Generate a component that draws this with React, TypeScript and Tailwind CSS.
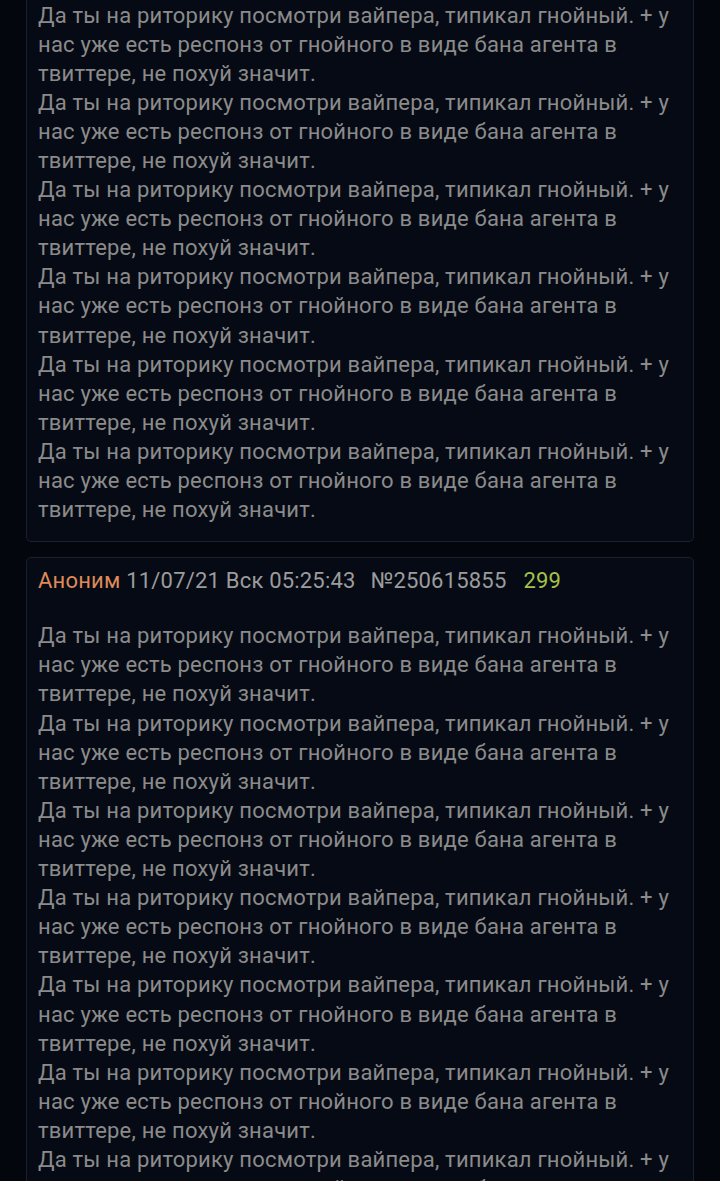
import React from "react";

const P = "Да ты на риторику посмотри вайпера, типикал гнойный. + у нас уже есть респонз от гнойного в виде бана агента в твиттере, не похуй значит.";

function Body({ n }: { n: number }) {
  return (
    <div className="text-[#8b8b8b] tracking-[0.2px]">
      {Array.from({ length: n }).map((_, i) => (
        <div key={i}>{P}</div>
      ))}
    </div>
  );
}

export default function App() {
  return (
    <div
      className="min-h-[1181px] h-[1181px] overflow-hidden bg-[#03060c] text-[22px] leading-[29.1px]"
      style={{ fontFamily: "Roboto, 'Noto Sans', sans-serif" }}
    >
      <div className="mx-[26px] -mt-[10px] rounded-[5px] border border-[#1a202c] bg-[#060a14] pl-[11px] pr-[10px] pt-[9.5px] pb-[17px]">
        <Body n={6} />
      </div>
      <div className="mx-[26px] mt-[15px] rounded-[5px] border border-[#1a202c] bg-[#060a14] pl-[11px] pr-[10px] pt-[8px] pb-[17px]">
        <div className="text-[#9c9c9c] whitespace-nowrap tracking-[0.2px]">
          <span className="text-[#de8a5a]">Аноним</span> 11/07/21 Вск 05:25:43
          <span className="ml-[15px]">№250615855</span>
          <span className="ml-[17px] text-[#a3c24b]">299</span>
        </div>
        <div className="mt-[26px]">
          <Body n={7} />
        </div>
      </div>
    </div>
  );
}
